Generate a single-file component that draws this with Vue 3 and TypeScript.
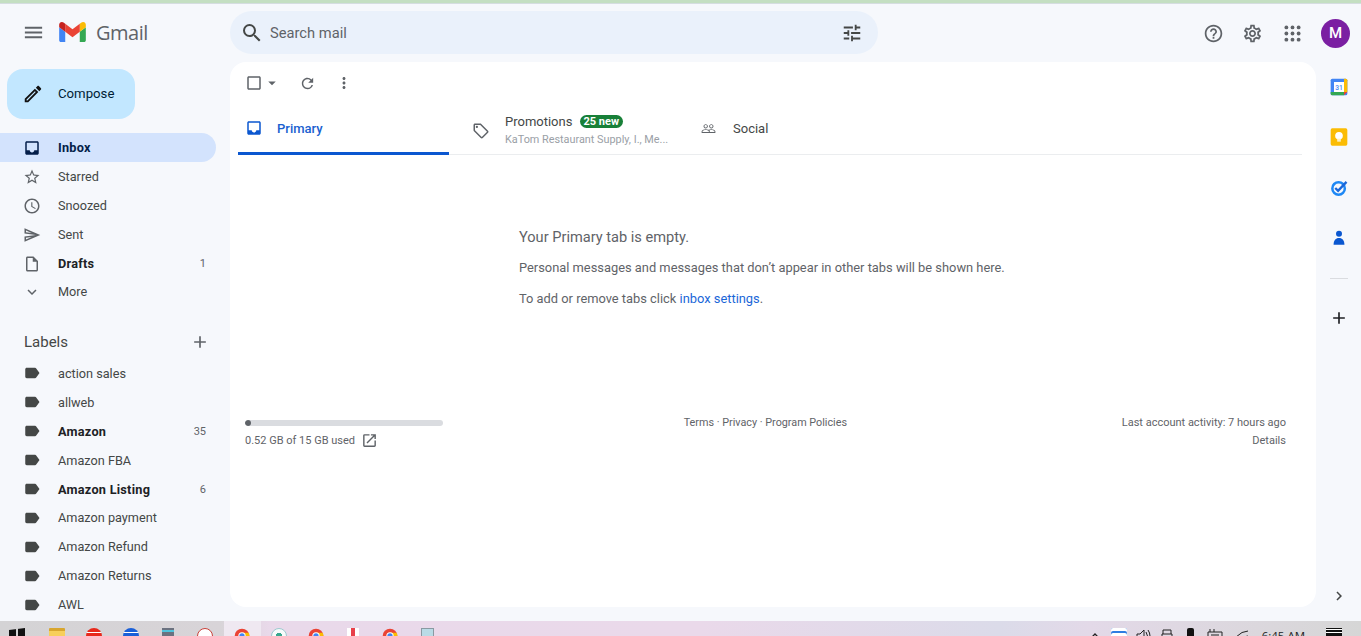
<script setup lang="ts">
const icons: Record<string, string> = {
  menu: "M3 18h18v-2H3v2zm0-5h18v-2H3v2zm0-7v2h18V6H3z",
  search: "M15.5 14h-.79l-.28-.27A6.471 6.471 0 0 0 16 9.5 6.5 6.5 0 1 0 9.5 16c1.61 0 3.09-.59 4.23-1.57l.27.28v.79l5 4.99L20.49 19l-4.99-5zm-6 0C7.01 14 5 11.99 5 9.5S7.01 5 9.5 5 14 7.01 14 9.5 11.99 14 9.5 14z",
  tune: "M3 17v2h6v-2H3zM3 5v2h10V5H3zm10 16v-2h8v-2h-8v-2h-2v6h2zM7 9v2H3v2h4v2h2V9H7zm14 4v-2H11v2h10zm-6-4h2V7h4V5h-4V3h-2v6z",
  help: "M11 18h2v-2h-2v2zm1-16C6.48 2 2 6.48 2 12s4.48 10 10 10 10-4.48 10-10S17.52 2 12 2zm0 18c-4.41 0-8-3.59-8-8s3.59-8 8-8 8 3.59 8 8-3.59 8-8 8zm0-14c-2.21 0-4 1.79-4 4h2c0-1.1.9-2 2-2s2 .9 2 2c0 2-3 1.75-3 5h2c0-2.25 3-2.5 3-5 0-2.21-1.79-4-4-4z",
  settings: "M19.43 12.98c.04-.32.07-.64.07-.98 0-.34-.03-.66-.07-.98l2.11-1.65c.19-.15.24-.42.12-.64l-2-3.46c-.09-.16-.26-.25-.44-.25-.06 0-.12.01-.17.03l-2.49 1c-.52-.4-1.08-.73-1.69-.98l-.38-2.65C14.46 2.18 14.25 2 14 2h-4c-.25 0-.46.18-.49.42l-.38 2.65c-.61.25-1.17.59-1.69.98l-2.49-1c-.06-.02-.12-.03-.18-.03-.17 0-.34.09-.43.25l-2 3.46c-.13.22-.07.49.12.64l2.11 1.65c-.04.32-.07.65-.07.98 0 .33.03.66.07.98l-2.11 1.65c-.19.15-.24.42-.12.64l2 3.46c.09.16.26.25.44.25.06 0 .12-.01.17-.03l2.49-1c.52.4 1.08.73 1.69.98l.38 2.65c.03.24.24.42.49.42h4c.25 0 .46-.18.49-.42l.38-2.65c.61-.25 1.17-.59 1.69-.98l2.49 1c.06.02.12.03.18.03.17 0 .34-.09.43-.25l2-3.46c.12-.22.07-.49-.12-.64l-2.11-1.65zm-1.98-1.71c.04.31.05.52.05.73 0 .21-.02.43-.05.73l-.14 1.13.89.7 1.08.84-.7 1.21-1.27-.51-1.04-.42-.9.68c-.43.32-.84.56-1.25.73l-1.06.43-.16 1.13-.2 1.35h-1.4l-.19-1.35-.16-1.13-1.06-.43c-.43-.18-.83-.41-1.23-.71l-.91-.7-1.06.43-1.27.51-.7-1.21 1.08-.84.89-.7-.14-1.13c-.03-.31-.05-.54-.05-.74s.02-.43.05-.73l.14-1.13-.89-.7-1.08-.84.7-1.21 1.27.51 1.04.42.9-.68c.43-.32.84-.56 1.25-.73l1.06-.43.16-1.13.2-1.35h1.39l.19 1.35.16 1.13 1.06.43c.43.18.83.41 1.23.71l.91.7 1.06-.43 1.27-.51.7 1.21-1.07.85-.89.7.14 1.13zM12 8c-2.21 0-4 1.79-4 4s1.79 4 4 4 4-1.79 4-4-1.79-4-4-4zm0 6c-1.1 0-2-.9-2-2s.9-2 2-2 2 .9 2 2-.9 2-2 2z",
  edit: "M3 17.25V21h3.75L17.81 9.94l-3.75-3.75L3 17.25zM5.92 19H5v-.92l9.06-9.06.92.92L5.92 19zM20.71 5.63l-2.34-2.34c-.2-.2-.45-.29-.71-.29s-.51.1-.7.29l-1.83 1.83 3.75 3.75 1.83-1.83c.39-.39.39-1.02 0-1.41z",
  inbox: "M19 3H5c-1.1 0-2 .9-2 2v14c0 1.1.9 2 2 2h14c1.1 0 2-.9 2-2V5c0-1.1-.9-2-2-2zm0 12h-4c0 1.66-1.35 3-3 3s-3-1.34-3-3H4.99V5H19v10z",
  star: "M22 9.24l-7.19-.62L12 2 9.19 8.63 2 9.24l5.46 4.73L5.82 21 12 17.27 18.18 21l-1.63-7.03L22 9.24zM12 15.4l-3.76 2.27 1-4.28-3.32-2.88 4.38-.38L12 6.1l1.71 4.04 4.38.38-3.32 2.88 1 4.28L12 15.4z",
  clock: "M11.99 2C6.47 2 2 6.48 2 12s4.47 10 9.99 10C17.52 22 22 17.52 22 12S17.52 2 11.99 2zM12 20c-4.42 0-8-3.58-8-8s3.58-8 8-8 8 3.58 8 8-3.58 8-8 8zm.5-13H11v6l5.25 3.15.75-1.23-4.5-2.67z",
  send: "M4.01 6.03l7.51 3.22-7.52-1 .01-2.22m7.5 8.72L4 17.97v-2.22l7.51-1M2.01 3L2 10l15 2-15 2 .01 7L23 12 2.01 3z",
  draft: "M14 2H6c-1.1 0-2 .9-2 2v16c0 1.1.9 2 2 2h12c1.1 0 2-.9 2-2V8l-6-6zM6 20V4h7v5h5v11H6z",
  more: "M16.59 8.59L12 13.17 7.41 8.59 6 10l6 6 6-6z",
  label: "M17.63 5.84C17.27 5.33 16.67 5 16 5L5 5.01C3.9 5.01 3 5.9 3 7v10c0 1.1.9 1.99 2 1.99L16 19c.67 0 1.27-.33 1.63-.84L22 12l-4.37-6.16z",
  add: "M19 13h-6v6h-2v-6H5v-2h6V5h2v6h6v2z",
  check: "M19 5v14H5V5h14m0-2H5c-1.1 0-2 .9-2 2v14c0 1.1.9 2 2 2h14c1.1 0 2-.9 2-2V5c0-1.1-.9-2-2-2z",
  drop: "M7 10l5 5 5-5z",
  refresh: "M17.65 6.35A7.958 7.958 0 0 0 12 4c-4.42 0-7.99 3.58-7.99 8s3.57 8 7.99 8c3.73 0 6.84-2.55 7.73-6h-2.08A5.99 5.99 0 0 1 12 18c-3.31 0-6-2.69-6-6s2.69-6 6-6c1.66 0 3.14.69 4.22 1.78L13 11h7V4l-2.35 2.35z",
  vert: "M12 8c1.1 0 2-.9 2-2s-.9-2-2-2-2 .9-2 2 .9 2 2 2zm0 2c-1.1 0-2 .9-2 2s.9 2 2 2 2-.9 2-2-.9-2-2-2zm0 6c-1.1 0-2 .9-2 2s.9 2 2 2 2-.9 2-2-.9-2-2-2z",
  tag: "M21.41 11.58l-9-9C12.05 2.22 11.55 2 11 2H4c-1.1 0-2 .9-2 2v7c0 .55.22 1.05.59 1.42l9 9c.36.36.86.58 1.41.58.55 0 1.05-.22 1.41-.59l7-7c.37-.36.59-.86.59-1.41 0-.55-.23-1.06-.59-1.42zM13 20.01L4 11V4h7v-.01l9 8.99-7 7.03zM6.5 5A1.5 1.5 0 1 0 6.5 8 1.5 1.5 0 1 0 6.5 5z",
  people: "M16.5 13c-1.2 0-3.07.34-4.5 1-1.43-.67-3.3-1-4.5-1C5.33 13 1 14.08 1 16.25V19h22v-2.75c0-2.17-4.33-3.25-6.5-3.25zm-4 4.5h-10v-1.25c0-.54 2.56-1.75 5-1.75s5 1.21 5 1.75v1.25zm9 0H14v-1.25c0-.46-.2-.86-.52-1.22.88-.3 1.96-.53 3.02-.53 2.44 0 5 1.21 5 1.75v1.25zM7.5 12c1.93 0 3.5-1.57 3.5-3.5S9.43 5 7.5 5 4 6.57 4 8.5 5.57 12 7.5 12zm0-5.5c1.1 0 2 .9 2 2s-.9 2-2 2-2-.9-2-2 .9-2 2-2zm9 5.5c1.93 0 3.5-1.57 3.5-3.5S18.43 5 16.5 5 13 6.57 13 8.5s1.57 3.5 3.5 3.5zm0-5.5c1.1 0 2 .9 2 2s-.9 2-2 2-2-.9-2-2 .9-2 2-2z",
  open: "M19 19H5V5h7V3H5a2 2 0 0 0-2 2v14a2 2 0 0 0 2 2h14c1.1 0 2-.9 2-2v-7h-2v7zM14 3v2h3.59l-9.83 9.83 1.41 1.41L19 6.41V10h2V3h-7z",
  chevron: "M8.59 16.59L13.17 12 8.59 7.41 10 6l6 6-6 6z",
}

const mainNav = [
  { name: "Inbox", icon: "inbox", active: true, bold: true, count: "" },
  { name: "Starred", icon: "star", active: false, bold: false, count: "" },
  { name: "Snoozed", icon: "clock", active: false, bold: false, count: "" },
  { name: "Sent", icon: "send", active: false, bold: false, count: "" },
  { name: "Drafts", icon: "draft", active: false, bold: true, count: "1" },
  { name: "More", icon: "more", active: false, bold: false, count: "" },
]

const labels = [
  { name: "action sales", bold: false, count: "" },
  { name: "allweb", bold: false, count: "" },
  { name: "Amazon", bold: true, count: "35" },
  { name: "Amazon FBA", bold: false, count: "" },
  { name: "Amazon Listing", bold: true, count: "6" },
  { name: "Amazon payment", bold: false, count: "" },
  { name: "Amazon Refund", bold: false, count: "" },
  { name: "Amazon Returns", bold: false, count: "" },
  { name: "AWL", bold: false, count: "" },
]

const chrome = "chrome"
const taskbarApps = ["win", "folder", "red", "blue", "calc", "gauge", chrome, "slack", chrome, "note", chrome, "pad"]
</script>

<template>
  <div class="page">
    <div class="strip"></div>
    <div class="body">
      <aside class="sidebar">
        <div class="brand">
          <svg class="ic brand__menu" viewBox="0 0 24 24"><path :d="icons.menu" /></svg>
          <svg class="brand__logo" viewBox="52 42 88 66">
            <path fill="#4285f4" d="M58 108h14V74L52 59v43c0 3.32 2.69 6 6 6" />
            <path fill="#34a853" d="M120 108h14c3.32 0 6-2.69 6-6V59l-20 15" />
            <path fill="#fbbc04" d="M120 48v26l20-15v-8c0-7.42-8.47-11.65-14.4-7.2" />
            <path fill="#ea4335" d="M72 74V48l24 18 24-18v26L96 92" />
            <path fill="#c5221f" d="M52 51v8l20 15V48l-5.6-4.2c-5.94-4.45-14.4-.22-14.4 7.2" />
          </svg>
          <span class="brand__name">Gmail</span>
        </div>
        <div class="compose">
          <svg class="ic compose__icon" viewBox="0 0 24 24"><path :d="icons.edit" /></svg>
          <span>Compose</span>
        </div>
        <nav class="nav">
          <div
            v-for="item in mainNav"
            :key="item.name"
            class="nav__row"
            :class="{ 'nav__row--active': item.active, 'nav__row--bold': item.bold }"
          >
            <svg class="ic nav__icon" viewBox="0 0 24 24"><path :d="icons[item.icon]" /></svg>
            <span class="nav__name">{{ item.name }}</span>
            <span class="nav__count">{{ item.count }}</span>
          </div>
        </nav>
        <div class="labels-head">
          <span>Labels</span>
          <svg class="ic" viewBox="0 0 24 24"><path :d="icons.add" /></svg>
        </div>
        <div class="labels">
          <div
            v-for="item in labels"
            :key="item.name"
            class="nav__row nav__row--label"
            :class="{ 'nav__row--bold': item.bold }"
          >
            <svg class="ic nav__icon label-icon" viewBox="0 0 24 24"><path :d="icons.label" /></svg>
            <span class="nav__name">{{ item.name }}</span>
            <span class="nav__count">{{ item.count }}</span>
          </div>
        </div>
      </aside>

      <div class="center">
        <header class="topbar">
          <div class="search">
            <svg class="ic search__icon" viewBox="0 0 24 24"><path :d="icons.search" /></svg>
            <span class="search__text">Search mail</span>
            <svg class="ic search__tune" viewBox="0 0 24 24"><path :d="icons.tune" /></svg>
          </div>
          <div class="top-actions">
            <svg class="ic" viewBox="0 0 24 24"><path :d="icons.help" /></svg>
            <svg class="ic" viewBox="0 0 24 24"><path :d="icons.settings" /></svg>
            <svg class="ic" viewBox="0 0 24 24">
              <template v-for="y in [5, 12, 19]" :key="y">
                <circle v-for="x in [5, 12, 19]" :key="x" :cx="x" :cy="y" r="2.2" />
              </template>
            </svg>
            <div class="avatar">M</div>
          </div>
        </header>

        <div class="content">
          <main class="card">
            <div class="toolbar">
              <svg class="ic tb-check" viewBox="0 0 24 24"><path :d="icons.check" /></svg>
              <svg class="ic tb-drop" viewBox="0 0 24 24"><path :d="icons.drop" /></svg>
              <svg class="ic tb-refresh" viewBox="0 0 24 24"><path :d="icons.refresh" /></svg>
              <svg class="ic tb-vert" viewBox="0 0 24 24"><path :d="icons.vert" /></svg>
            </div>
            <div class="tabs">
              <div class="tab tab--active">
                <svg class="ic tab__icon" viewBox="0 0 24 24"><path :d="icons.inbox" /></svg>
                <span>Primary</span>
              </div>
              <div class="tab tab--promo">
                <svg class="ic tab__icon" viewBox="0 0 24 24"><path :d="icons.tag" /></svg>
                <div class="promo">
                  <div class="promo__top">
                    <span>Promotions</span>
                    <span class="badge">25 new</span>
                  </div>
                  <div class="promo__sub">KaTom Restaurant Supply, I., Me...</div>
                </div>
              </div>
              <div class="tab tab--social">
                <svg class="ic tab__icon" viewBox="0 0 24 24"><path :d="icons.people" /></svg>
                <span>Social</span>
              </div>
            </div>

            <div class="empty">
              <p class="empty__title">Your Primary tab is empty.</p>
              <p class="empty__line">Personal messages and messages that don’t appear in other tabs will be shown here.</p>
              <p class="empty__line">To add or remove tabs click <a class="link">inbox settings</a>.</p>
            </div>

            <footer class="foot">
              <div class="storage">
                <div class="storage__bar"><div class="storage__fill" :style="{ width: '3%' }"></div></div>
                <div class="storage__text">
                  <span>0.52 GB of 15 GB used</span>
                  <svg class="ic" viewBox="0 0 24 24"><path :d="icons.open" /></svg>
                </div>
              </div>
              <div class="terms">Terms · Privacy · Program Policies</div>
              <div class="activity">
                <div>Last account activity: 7 hours ago</div>
                <div>Details</div>
              </div>
            </footer>
          </main>

          <aside class="rail">
            <svg class="rail__icon" viewBox="0 0 24 24">
              <rect x="2" y="2" width="20" height="20" rx="2" fill="#4285f4" />
              <path d="M18 2h2a2 2 0 0 1 2 2v14h-4z" fill="#fbbc04" />
              <path d="M2 18h16v4H4a2 2 0 0 1-2-2z" fill="#34a853" />
              <path d="M18 18h4l-4 4z" fill="#ea4335" />
              <rect x="6" y="6" width="12" height="12" fill="#fff" />
              <text x="12" y="15.5" class="rail__date">31</text>
            </svg>
            <svg class="rail__icon" viewBox="0 0 24 24">
              <rect x="2" y="1.5" width="20" height="21" rx="2" fill="#fbbc04" />
              <circle cx="12" cy="10.5" r="4.6" fill="#fff" />
              <rect x="9.8" y="14" width="4.4" height="3.6" fill="#fef0c0" />
            </svg>
            <svg class="rail__icon" viewBox="0 0 24 24">
              <circle cx="11.5" cy="12.5" r="7.5" fill="none" stroke="#1e88f5" stroke-width="3" />
              <path d="M7.5 12l3.4 3.4L21 4.6" fill="none" stroke="#1a66d8" stroke-width="2.8" />
            </svg>
            <svg class="rail__icon" viewBox="0 0 24 24">
              <circle cx="12" cy="7" r="3.6" fill="#0b57d0" />
              <path d="M5.5 20c0-5 2.5-8 6.5-8s6.500 3 6.500 8z" fill="#0b57d0" />
            </svg>
            <div class="rail__sep"></div>
            <svg class="ic rail__add" viewBox="0 0 24 24"><path :d="icons.add" /></svg>
            <svg class="ic rail__chevron" viewBox="0 0 24 24"><path :d="icons.chevron" /></svg>
          </aside>
        </div>
      </div>
    </div>

    <div class="taskbar">
      <div class="taskbar__apps">
        <div
          v-for="(app, i) in taskbarApps"
          :key="i"
          class="app"
          :class="[`app--${app}`, { 'app--current': i === 6 }]"
        >
          <svg v-if="app === 'chrome'" class="app__svg" viewBox="0 0 24 24">
            <circle cx="12" cy="12" r="11" fill="#ea4335" />
            <path d="M12 12L22 17A11 11 0 0 1 6 21.5z" fill="#34a853" />
            <path d="M12 7h10A11 11 0 0 1 12 23z" fill="#fbbc04" />
            <circle cx="12" cy="12" r="5.5" fill="#fff" />
            <circle cx="12" cy="12" r="4" fill="#4285f4" />
          </svg>
          <div v-else class="app__shape"></div>
        </div>
      </div>
      <div class="tray">
        <div class="tray__cell">
          <svg class="tray__icon tray__caret" viewBox="0 0 12 12"><path d="M2 7l4-4 4 4" fill="none" stroke="#222" stroke-width="1.3" /></svg>
        </div>
        <div class="tray__cell"><div class="tray__g"></div></div>
        <div class="tray__cell">
          <svg class="tray__icon" viewBox="0 0 16 16"><path d="M2 6h3l4-4v12l-4-4H2zM11 4q3 4 0 8M13 2q4 6 0 12" fill="none" stroke="#222" /></svg>
        </div>
        <div class="tray__cell">
          <svg class="tray__icon" viewBox="0 0 16 16"><path d="M4 6V2h8v4M3 6h10v8H3z" fill="none" stroke="#222" /></svg>
        </div>
        <div class="tray__cell"><div class="tray__phone"></div></div>
        <div class="tray__cell">
          <svg class="tray__icon" viewBox="0 0 16 16"><path d="M1 4h14v10H1zM3 1v3M7 1v3M4 7h8" fill="none" stroke="#222" /></svg>
        </div>
        <div class="tray__cell tray__cell--wifi">
          <svg class="tray__icon" viewBox="0 0 16 16"><path d="M2 9q6-6 12-6M5 12q4-4 9-4" fill="none" stroke="#222" /></svg>
        </div>
        <span class="tray__time">6:45 AM</span>
        <div class="tray__note"></div>
      </div>
    </div>
  </div>
</template>

<style scoped>
.page {
  height: 636px;
  display: flex;
  flex-direction: column;
  overflow: hidden;
  background: #f6f8fc;
  font-family: Roboto, "Liberation Sans", sans-serif;
  font-size: 13px;
  color: #444746;
}

.strip {
  height: 3px;
  flex-shrink: 0;
  background: #c4dfc2;
  border-bottom: 1px solid #d5dde0;
}

.body {
  flex: 1;
  min-height: 0;
  display: flex;
}

.ic {
  width: 20px;
  height: 20px;
  fill: #5f6368;
  flex-shrink: 0;
}

.sidebar {
  width: 230px;
  flex-shrink: 0;
  overflow: hidden;
}

.brand {
  height: 56px;
  display: flex;
  align-items: center;
  padding-left: 21.5px;
}

.brand__menu {
  width: 23px;
  height: 23px;
}

.brand__logo {
  width: 27px;
  height: 20px;
  margin-left: 14.5px;
}

.brand__name {
  margin-left: 10px;
  font-family: "Open Sans", sans-serif;
  font-size: 20px;
  letter-spacing: -0.5px;
  color: #5f6368;
}

.compose {
  width: 128px;
  height: 50px;
  margin: 9px 0 14px 7px;
  box-sizing: border-box;
  padding-bottom: 1px;
  display: flex;
  align-items: center;
  border-radius: 16px;
  background: #c2e7ff;
  color: #001d35;
  font-size: 13.2px;
}

.compose__icon {
  width: 22px;
  height: 22px;
  margin-left: 15px;
  margin-right: 14px;
  fill: #111;
}

.nav__row {
  width: 216px;
  height: 29px;
  display: flex;
  align-items: center;
  box-sizing: border-box;
  padding: 0 10px 0 23px;
  border-radius: 0 15px 15px 0;
  font-size: 12.7px;
}

.nav__row--label {
  height: 28.9px;
}

.nav__row--active {
  background: #d3e3fd;
  color: #041e49;
}

.nav__row--bold {
  font-weight: 700;
  letter-spacing: 0.25px;
  color: #202124;
}

.nav__row--active.nav__row--bold {
  color: #041e49;
}

.nav__icon {
  width: 18px;
  height: 18px;
  margin-right: 17px;
}

.nav__row--active .nav__icon {
  fill: #041e49;
}

.nav__row:last-child:not(.nav__row--label) {
  margin-top: -1px;
}

.label-icon {
  fill: #444746;
}

.nav__name {
  flex: 1;
}

.nav__count {
  font-size: 11px;
  font-weight: 400;
  letter-spacing: 0;
  color: #5f6368;
}

.labels-head {
  display: flex;
  align-items: center;
  justify-content: space-between;
  width: 216px;
  height: 24px;
  margin-top: 24px;
  margin-bottom: 5px;
  box-sizing: border-box;
  padding: 0 6px 0 24px;
  font-size: 15px;
  color: #444746;
}

.center {
  flex: 1;
  min-width: 0;
  display: flex;
  flex-direction: column;
}

.topbar {
  height: 58px;
  flex-shrink: 0;
  display: flex;
  align-items: center;
  box-sizing: border-box;
  padding: 0 11px 0 0;
  justify-content: space-between;
}

.search {
  width: 648px;
  height: 43px;
  display: flex;
  align-items: center;
  border-radius: 22px;
  background: #eaf1fb;
  margin-top: -1px;
}

.search__icon {
  width: 24px;
  height: 24px;
  margin-left: 10px;
  fill: #444746;
}

.search__text {
  flex: 1;
  margin-left: 6px;
  font-size: 14.7px;
  color: #5f6368;
}

.search__tune {
  margin-right: 15px;
  fill: #444746;
  width: 22px;
  height: 22px;
}

.top-actions {
  display: flex;
  align-items: center;
  gap: 18.5px;
}

.top-actions .ic {
  width: 21px;
  height: 21px;
}

.avatar {
  width: 29px;
  height: 29px;
  border-radius: 50%;
  background: #7b1fa2;
  color: #fff;
  font-size: 15px;
  font-weight: 500;
  display: flex;
  align-items: center;
  justify-content: center;
}

.content {
  flex: 1;
  min-height: 0;
  display: flex;
  padding-bottom: 14px;
}

.card {
  width: 1086px;
  flex-shrink: 0;
  box-sizing: border-box;
  border-radius: 16px;
  background: #fff;
  padding: 0 14px 0 8px;
  display: flex;
  flex-direction: column;
}

.toolbar {
  height: 42px;
  display: flex;
  align-items: center;
  padding-left: 7px;
}

.tb-check {
  width: 18px;
  height: 18px;
}

.tb-drop {
  width: 18px;
  height: 18px;
}

.tb-refresh {
  width: 17px;
  height: 17px;
  margin-left: 18px;
}

.tb-vert {
  width: 18px;
  height: 18px;
  margin-left: 19px;
}

.tabs {
  display: flex;
  height: 51px;
  box-sizing: border-box;
  border-bottom: 1px solid #ebedef;
  color: #444746;
}

.tab {
  display: flex;
  align-items: center;
  height: 51px;
  flex-shrink: 0;
  box-sizing: border-box;
  padding-bottom: 3px;
}

.tab__icon {
  width: 18px;
  height: 18px;
}

.tab--active {
  width: 211px;
  padding-left: 7px;
  color: #1a5fd0;
  font-weight: 500;
  border-bottom: 3px solid #0b57d0;
  padding-bottom: 0;
  border-radius: 3px 3px 0 0;
}

.tab--active .tab__icon {
  fill: #0b57d0;
  margin-right: 14px;
}

.tab--promo {
  width: 244px;
  padding-left: 23px;
  padding-bottom: 0;
}

.tab--promo .tab__icon {
  margin-right: 15px;
  margin-top: 2px;
}

.promo__top {
  display: flex;
  align-items: center;
  gap: 8px;
}

.promo__sub {
  margin-top: 4px;
  font-size: 10.85px;
  color: #9aa0a6;
}

.badge {
  height: 13px;
  line-height: 13px;
  padding: 0 4px 0 3px;
  border-radius: 7px;
  background: #188038;
  color: #fff;
  font-size: 11px;
  font-weight: 700;
}

.tab--social {
  padding-left: 8px;
}

.tab--social .tab__icon {
  width: 15px;
  height: 15px;
  margin-right: 17px;
}

.empty {
  margin: 71.5px 0 0 281px;
  height: 193.5px;
}

.empty__title {
  margin: 0 0 13.5px;
  font-size: 14.6px;
  line-height: 20px;
  color: #5f6368;
}

.empty__line {
  margin: 0 0 15px;
  font-size: 12.87px;
  line-height: 16px;
  color: #5f6368;
}

.link {
  color: #1a66d8;
}

.foot {
  display: flex;
  justify-content: space-between;
  padding: 0 16px 0 7px;
  font-size: 11px;
  color: #5f6368;
}

.storage {
  width: 198px;
}

.storage__bar {
  height: 6px;
  border-radius: 3px;
  background: #dadce0;
  overflow: hidden;
}

.storage__fill {
  height: 100%;
  border-radius: 3px;
  background: #5f6368;
}

.storage__text {
  display: flex;
  align-items: center;
  gap: 6px;
  margin-top: 6px;
}

.storage__text .ic {
  width: 17px;
  height: 17px;
}

.terms {
  margin-right: 34px;
  margin-top: -6px;
  font-size: 10.8px;
  line-height: 18px;
}

.activity {
  text-align: right;
  margin-top: -6px;
  line-height: 18px;
}

.rail {
  flex: 1;
  display: flex;
  flex-direction: column;
  align-items: center;
  padding-top: 15px;
}

.rail__icon {
  width: 20px;
  height: 20px;
  margin-bottom: 30.3px;
  flex-shrink: 0;
}

.rail__date {
  font-family: Roboto, sans-serif;
  font-size: 8px;
  font-weight: 500;
  fill: #4285f4;
  text-anchor: middle;
}

.rail__sep {
  width: 18px;
  height: 1px;
  background: #dadce0;
}

.rail__add {
  width: 20px;
  height: 20px;
  margin-top: 29px;
  fill: #202124;
}

.rail__chevron {
  margin-top: auto;
  fill: #444746;
  width: 18px;
  height: 18px;
  position: relative;
  top: -2px;
}

.taskbar {
  height: 15px;
  flex-shrink: 0;
  display: flex;
  justify-content: space-between;
  overflow: hidden;
  background: linear-gradient(90deg, #d4d3d5 0, #d8d4d8 220px, #e9d9ea 270px, #ead9ea 700px, #dbdbe9 1000px, #e3d9e8 1090px, #d6d6d6 1361px);
}

.taskbar__apps {
  display: flex;
  padding-left: 1.5px;
}

.app {
  width: 37px;
  height: 15px;
  display: flex;
  justify-content: center;
  padding-top: 7px;
  box-sizing: border-box;
  overflow: hidden;
}

.app--current {
  background: #efe8f1;
}

.app__svg {
  width: 16px;
  height: 16px;
  flex-shrink: 0;
}

.app__shape {
  width: 16px;
  height: 16px;
  flex-shrink: 0;
  border-radius: 50%;
}

.app--win .app__shape {
  margin-right: 6px;
  border-radius: 0;
  background: linear-gradient(90deg, #111 46%, transparent 46%, transparent 54%, #111 54%);
  clip-path: polygon(0 12%, 100% 0, 100% 100%, 0 88%);
}

.app--folder .app__shape {
  border-radius: 1px;
  background: linear-gradient(180deg, #d8a62f 0 3px, #f7cf5b 3px);
}

.app--red .app__shape {
  background: linear-gradient(180deg, #e8291c 0 4px, #fff 4px 5px, #e8291c 5px);
}

.app--blue .app__shape {
  background: linear-gradient(180deg, #1a5fd8 0 4px, #fff 4px 5px, #1a5fd8 5px);
}

.app--calc .app__shape {
  width: 12px;
  border-radius: 0;
  background: linear-gradient(180deg, #6b7280 0 2px, #4fc3dc 2px 4px, #6b7280 4px);
}

.app--gauge .app__shape {
  background: #fff;
  border: 1px solid #c9413a;
  box-sizing: border-box;
}

.app--slack .app__shape {
  background: radial-gradient(circle, #3aa88f 0 3px, #f7fbfb 3.5px);
  border: 1px solid #9ccbd0;
  box-sizing: border-box;
}

.app--note .app__shape {
  width: 12px;
  border-radius: 0;
  background: linear-gradient(90deg, #fff 35%, #e8404a 35% 65%, #fff 65%);
}

.app--pad .app__shape {
  width: 13px;
  border-radius: 0;
  background: #b9dbe6;
  border: 1px solid #8a9aa2;
  box-sizing: border-box;
}

.tray {
  display: flex;
  align-items: flex-start;
  padding-top: 7px;
  padding-right: 19px;
  overflow: hidden;
}

.tray__cell {
  width: 24px;
  display: flex;
  justify-content: center;
  flex-shrink: 0;
}

.tray__cell--wifi {
  margin-left: 3px;
}

.tray__icon {
  width: 16px;
  height: 16px;
  flex-shrink: 0;
}

.tray__caret {
  width: 12px;
  margin-top: 1px;
}

.tray__g {
  width: 16px;
  height: 16px;
  background: #fff;
  border-radius: 2px 2px 0 0;
  box-shadow: inset 0 3px 0 #fff, inset 0 5px 0 #2f7de1;
}

.tray__phone {
  width: 7px;
  height: 14px;
  border-radius: 2px;
  background: #111;
}

.tray__time {
  margin-left: 8px;
  margin-right: 21px;
  font-family: "Open Sans", sans-serif;
  font-size: 11.5px;
  line-height: 15px;
  color: #222;
  white-space: nowrap;
}

.tray__note {
  width: 16px;
  height: 14px;
  background: linear-gradient(180deg, #111 0 1px, #fff 1px 2px, #111 2px 4px, #fff 4px 5px, #111 5px);
}
</style>
